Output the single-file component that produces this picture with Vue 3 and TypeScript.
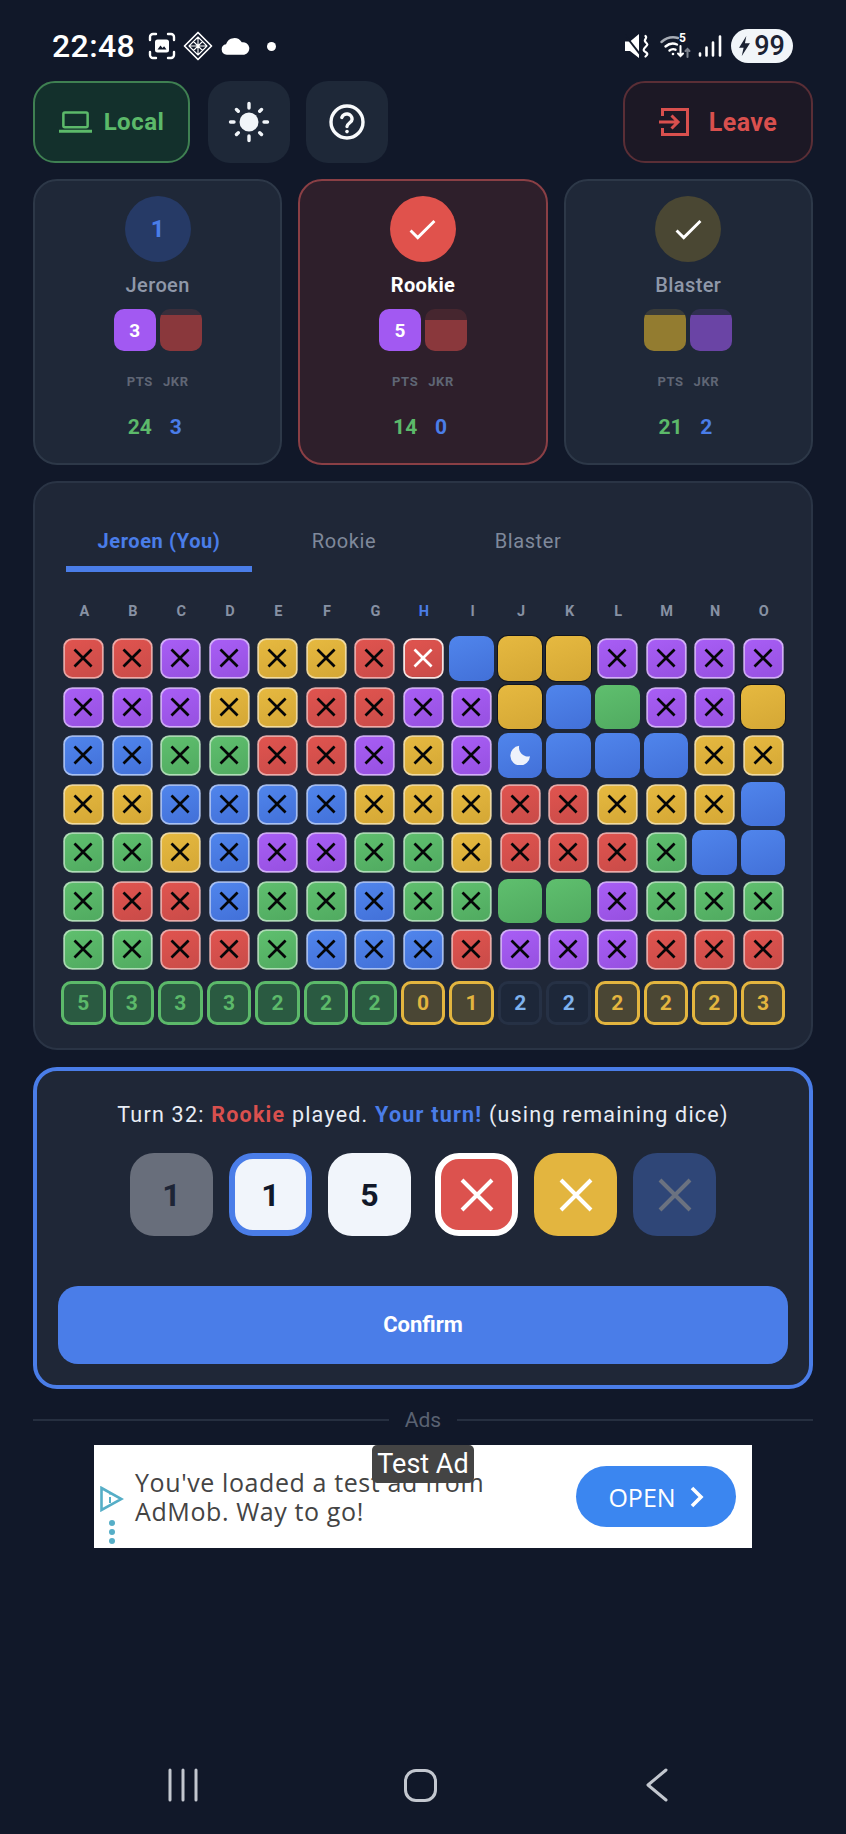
<script setup lang="ts">
import { computed } from 'vue';

type Tone = 'r' | 'p' | 'y' | 'b' | 'g';

interface MiniDie {
  tone: Tone;
  label?: string;
  fill?: number;
}

interface Player {
  name: string;
  badge?: string;
  check: boolean;
  cls: string;
  dice: MiniDie[];
  pts: number;
  jkr: number;
}

const players: Player[] = [
  { name: 'Jeroen', badge: '1', check: false, cls: 'me', dice: [{ tone: 'p', label: '3' }, { tone: 'r', fill: 86 }], pts: 24, jkr: 3 },
  { name: 'Rookie', check: true, cls: 'active', dice: [{ tone: 'p', label: '5' }, { tone: 'r', fill: 74 }], pts: 14, jkr: 0 },
  { name: 'Blaster', check: true, cls: 'done', dice: [{ tone: 'y', fill: 86 }, { tone: 'p', fill: 86 }], pts: 21, jkr: 2 },
];

const tabs = ['Jeroen (You)', 'Rookie', 'Blaster'];
const columns = 'ABCDEFGHIJKLMNO'.split('');

// lowercase = crossed off, uppercase = still open
const rows = [
  'rrppyyrrBYYpppp',
  'pppyyrrppYBGppY',
  'bbggrrpypBBBByy',
  'yybbbbyyyrryyyB',
  'ggybppggyrrrgBB',
  'grrbggbggGGpggg',
  'ggrrgbbbrppprrr',
];

const cells = computed(() =>
  rows.flatMap((row, r) =>
    row.split('').map((ch, c) => ({
      id: `${r}-${c}`,
      tone: ch.toLowerCase(),
      crossed: ch === ch.toLowerCase(),
      picked: r === 0 && c === 7,
      moon: r === 2 && c === 9,
    })),
  ),
);

const totals: { n: number; kind: string }[] = [
  ...[5, 3, 3, 3, 2, 2, 2].map((n) => ({ n, kind: 'won' })),
  ...[0, 1].map((n) => ({ n, kind: 'gold' })),
  ...[2, 2].map((n) => ({ n, kind: 'idle' })),
  ...[2, 2, 2, 3].map((n) => ({ n, kind: 'gold' })),
];
</script>

<template>
  <div class="page">
    <div class="status">
      <div class="status-left">
        <span class="time">22:48</span>
        <svg class="ic-shot" viewBox="0 0 28 28" fill="none" stroke="#fff" stroke-width="2.4" stroke-linecap="round">
          <path d="M2 8V5a3 3 0 0 1 3-3h3M20 2h3a3 3 0 0 1 3 3v3M26 20v3a3 3 0 0 1-3 3h-3M8 26H5a3 3 0 0 1-3-3v-3" />
          <rect x="7" y="7.5" width="14" height="13" rx="2.5" fill="#fff" stroke="none" />
          <path d="M9.5 17.5l3-4 2 2.4 1.6-1.6 2.4 3.2z" fill="#111829" stroke="none" />
        </svg>
        <svg class="ic-kite" viewBox="0 0 30 30" fill="none" stroke="#fff" stroke-width="1.7" stroke-linejoin="round">
          <path d="M15 1.5 28.5 15 15 28.5 1.5 15z" />
          <path d="M15 6 24 15 15 24 6 15zM10.5 10.5 19.5 19.5M19.5 10.5 10.5 19.5M15 6V24M6 15H24" stroke-width="1.1" />
        </svg>
        <svg class="ic-cloud" viewBox="0 0 30 17" fill="#fff">
          <path d="M6 17a5.500 5.500 0 0 1-.8-10.900A9 9 0 0 1 21.500 4.200 6.500 6.500 0 0 1 24 17z" />
        </svg>
        <span class="dot"></span>
      </div>
      <div class="status-right">
        <svg class="ic-mute" viewBox="0 0 26 24" fill="#fff">
          <path d="M0 7.500h5L14 0v24l-9-7H0z" />
          <path d="M0 1 18 24" fill="none" stroke="#111829" stroke-width="2" />
          <path d="M20.500 2c2.500 2.500-2.500 3.500 0 6s2.500 2.500 0 5-2.500 3.500 0 5 2.500 2.500 0 4.500" fill="none" stroke="#fff" stroke-width="2.200" stroke-linecap="round" />
        </svg>
        <div class="wifi">
          <svg viewBox="0 0 32 24" fill="none" stroke="#fff" stroke-width="2.400" stroke-linecap="round">
            <path d="M1.500 8C6 4 12.500 2.500 18 4" stroke="#a7acb5" />
            <path d="M5.500 12.500c3.500-3 8-3.500 11.500-2" />
            <path d="M9.500 16.500c2-1.500 4-1.700 6-.8" />
            <circle cx="13" cy="20" r="1.300" fill="#fff" stroke="none" />
            <path d="M20.500 12v10M18 19.500l2.500 2.500 2.500-2.500" stroke-width="2" />
            <path d="M27.500 23v-8M25.500 17l2-2 2 2" stroke="#7d838e" stroke-width="2" />
          </svg>
          <span class="wifi-five">5</span>
        </div>
        <svg class="ic-signal" viewBox="0 0 24 22" fill="none" stroke="#fff" stroke-width="2.600" stroke-linecap="round">
          <path d="M2 20.500v-2M8.500 20.500v-8M15 20.500V7.500M22 20.500V1.500" />
        </svg>
        <div class="battery">
          <svg viewBox="0 0 12 22" fill="#1b2233"><path d="M8 0 0 13h5l-2 9 9-14H6.500z" /></svg>
          <span>99</span>
        </div>
      </div>
    </div>

    <div class="actions">
      <button class="btn local">
        <svg viewBox="0 0 34 22" fill="none" stroke="currentColor" stroke-width="2.600">
          <rect x="4.500" y="1.300" width="25" height="15" rx="1.500" />
          <path d="M0 20.500h34" stroke-width="3" />
        </svg>
        <span>Local</span>
      </button>
      <button class="btn square">
        <svg viewBox="0 0 42 42" fill="#f1f5f9" stroke="#f1f5f9" stroke-width="3.400" stroke-linecap="round">
          <circle cx="21" cy="21" r="9.500" stroke="none" />
          <path d="M21 2.500v4.500M21 35v4.500M2.500 21H6M36 21h3.500M8.500 8.500l1.800 1.800M31.700 31.700l1.800 1.800M8.500 33.500l1.800-1.800M31.700 10.300l1.800-1.800" />
        </svg>
      </button>
      <button class="btn square">
        <svg viewBox="0 0 36 36" fill="none" stroke="#f8fafc" stroke-width="3.400" stroke-linecap="round">
          <circle cx="18" cy="18" r="16" />
          <path d="M12.800 13.500a5.300 5.300 0 0 1 10.300 1.700c0 3.500-5.100 4.100-5.100 7.300" />
          <path d="M18 27.500v.1" stroke-width="3.600" />
        </svg>
      </button>
      <button class="btn leave">
        <svg viewBox="0 0 30 28" fill="none" stroke="currentColor" stroke-width="3">
          <path d="M3.500 8V1.500h25v25h-25V20" />
          <path d="M0 14h19M12.500 7.500 19 14l-6.500 6.500" />
        </svg>
        <span>Leave</span>
      </button>
    </div>

    <div class="players">
      <div v-for="p in players" :key="p.name" class="player" :class="p.cls">
        <div class="avatar">
          <svg v-if="p.check" viewBox="0 0 28 22" fill="none" stroke="#fff" stroke-width="3">
            <path d="M1.500 12 9 19.500 26.500 2" />
          </svg>
          <span v-else>{{ p.badge }}</span>
        </div>
        <div class="name">{{ p.name }}</div>
        <div class="mini-dice">
          <div v-for="(d, i) in p.dice" :key="i" class="mini" :class="'t-' + d.tone + (d.label ? ' solid' : '')">
            <template v-if="d.label">{{ d.label }}</template>
            <div v-else class="mini-fill" :style="{ height: d.fill + '%' }"></div>
          </div>
        </div>
        <div class="stats">
          <span class="stat-label">PTS</span>
          <span class="stat-label">JKR</span>
          <span class="stat-val pts">{{ p.pts }}</span>
          <span class="stat-val jkr">{{ p.jkr }}</span>
        </div>
      </div>
    </div>

    <section class="board">
      <div class="tabs">
        <div v-for="(t, i) in tabs" :key="t" class="tab" :class="{ on: i === 0 }">{{ t }}</div>
      </div>
      <div class="grid heads">
        <span v-for="c in columns" :key="c" class="head" :class="{ now: c === 'H' }">{{ c }}</span>
      </div>
      <div class="grid">
        <div
          v-for="c in cells"
          :key="c.id"
          class="cell"
          :class="['t-' + c.tone, { crossed: c.crossed, picked: c.picked }]"
        >
          <svg v-if="c.crossed" viewBox="0 0 22 22" fill="none" stroke="currentColor" stroke-width="3">
            <path d="M1.500 1.500 20.500 20.500M20.500 1.500 1.500 20.500" />
          </svg>
          <svg v-if="c.moon" class="moon" viewBox="0 0 24 24" fill="#eef2fb">
            <path d="M11 1A11.800 11.800 0 1 0 24 13.500 10.700 10.700 0 0 1 11 1z" />
          </svg>
        </div>
        <div v-for="(t, i) in totals" :key="i" class="total" :class="t.kind">{{ t.n }}</div>
      </div>
    </section>

    <section class="turn">
      <p class="turn-text">
        Turn 32: <b class="red">Rookie</b> played. <b class="blue">Your turn!</b> (using remaining dice)
      </p>
      <div class="dice-row">
        <div class="dice-group">
          <div class="die num off">1</div>
          <div class="die num sel">1</div>
          <div class="die num">5</div>
        </div>
        <div class="dice-group">
          <div class="die x-red">
            <svg viewBox="0 0 34 34" fill="none" stroke="#fff" stroke-width="4"><path d="M2 2 32 32M32 2 2 32" /></svg>
          </div>
          <div class="die x-yellow">
            <svg viewBox="0 0 34 34" fill="none" stroke="#fff" stroke-width="4"><path d="M2 2 32 32M32 2 2 32" /></svg>
          </div>
          <div class="die x-blue">
            <svg viewBox="0 0 34 34" fill="none" stroke="#6b7280" stroke-width="4"><path d="M2 2 32 32M32 2 2 32" /></svg>
          </div>
        </div>
      </div>
      <button class="confirm">Confirm</button>
    </section>

    <div class="ads-label">
      <span class="line"></span>
      <span>Ads</span>
      <span class="line"></span>
    </div>

    <div class="ad">
      <div class="test-tag">Test Ad</div>
      <div class="ad-marks">
        <svg viewBox="0 0 24 26" fill="none" stroke="#56aec7" stroke-width="2.600">
          <path d="M1.500 2 21.500 13 1.500 24z" />
          <path d="M10 11v6M10 7.500v1" stroke-width="2" />
        </svg>
        <span></span><span></span><span></span>
      </div>
      <div class="ad-copy">You've loaded a test ad from<br />AdMob. Way to go!</div>
      <div class="ad-open">
        <span>OPEN</span>
        <svg viewBox="0 0 14 22" fill="none" stroke="#fff" stroke-width="3.600"><path d="M2 2l9 9-9 9" /></svg>
      </div>
    </div>

    <div class="nav">
      <svg class="nav-recents" viewBox="0 0 30 34" fill="none" stroke="#c3c7cf" stroke-width="3" stroke-linecap="round">
        <path d="M2 2v30M15 2v30M28 2v30" />
      </svg>
      <div class="nav-home"></div>
      <svg class="nav-back" viewBox="0 0 22 34" fill="none" stroke="#c3c7cf" stroke-width="3" stroke-linecap="round" stroke-linejoin="round">
        <path d="M20 2 2 17 20 32" />
      </svg>
    </div>
  </div>
</template>

<style scoped>
.page {
  width: 846px;
  height: 1834px;
  background: #111829;
  display: flex;
  flex-direction: column;
  font-family: Roboto, "Liberation Sans", sans-serif;
  color: #f1f5f9;
  overflow: hidden;
}

/* status bar */
.status {
  height: 34px;
  margin-top: 29px;
  padding: 0 53px 0 52px;
  display: flex;
  justify-content: space-between;
  align-items: center;
}
.status-left,
.status-right {
  display: flex;
  align-items: center;
}
.time {
  font-size: 32px;
  font-weight: 500;
  color: #fff;
  letter-spacing: 0.4px;
}
.ic-shot {
  width: 28px;
  height: 28px;
  margin-left: 13px;
}
.ic-kite {
  width: 30px;
  height: 30px;
  margin-left: 7px;
}
.ic-cloud {
  width: 29px;
  height: 17px;
  margin-left: 8px;
}
.dot {
  width: 9px;
  height: 9px;
  border-radius: 50%;
  background: #fff;
  margin-left: 17px;
}
.ic-mute {
  width: 26px;
  height: 24px;
}
.wifi {
  position: relative;
  width: 32px;
  height: 24px;
  margin-left: 9px;
}
.wifi svg {
  width: 32px;
  height: 24px;
  display: block;
}
.wifi-five {
  position: absolute;
  left: 19px;
  top: -3px;
  font-size: 12px;
  font-weight: 700;
  color: #fff;
}
.ic-signal {
  width: 24px;
  height: 22px;
  margin-left: 6px;
}
.battery {
  width: 62px;
  height: 34px;
  margin-left: 9px;
  border-radius: 17px;
  background: #f1f5f9;
  display: flex;
  align-items: center;
  justify-content: center;
  gap: 4px;
  color: #1b2233;
  font-size: 27px;
  font-weight: 500;
}
.battery svg {
  width: 11px;
  height: 20px;
}

/* top buttons */
.actions {
  margin-top: 18px;
  padding: 0 33px;
  display: flex;
  gap: 16px;
}
.btn {
  height: 82px;
  border: 2px solid transparent;
  border-radius: 22px;
  display: flex;
  align-items: center;
  justify-content: center;
  font-family: inherit;
  font-weight: 700;
  padding: 0;
}
.btn span {
  letter-spacing: 0.5px;
}
.local {
  width: 157px;
  margin-right: 2px;
  gap: 12px;
  background: #13302c;
  border-color: #3f8052;
  color: #5cb96a;
  font-size: 24px;
}
.local svg {
  width: 33px;
  height: 22px;
}
.square {
  width: 82px;
  background: #1e2838;
}
.square:nth-child(2) svg {
  width: 42px;
  height: 42px;
}
.square:nth-child(3) svg {
  width: 36px;
  height: 36px;
}
.leave {
  width: 190px;
  margin-left: auto;
  gap: 20px;
  background: #1c1825;
  border-color: #5a2e36;
  color: #d9504e;
  font-size: 25px;
}
.leave svg {
  width: 30px;
  height: 28px;
}

/* player cards */
.players {
  margin-top: 16px;
  padding: 0 33px;
  display: grid;
  grid-template-columns: repeat(3, 1fr);
  gap: 16px;
}
.player {
  height: 286px;
  box-sizing: border-box;
  padding-top: 15px;
  border: 2px solid #2d3848;
  border-radius: 24px;
  background: #1f2838;
  display: flex;
  flex-direction: column;
  align-items: center;
}
.player.active {
  background: #2e1f2b;
  border-color: #8a3f45;
}
.avatar {
  width: 66px;
  height: 66px;
  border-radius: 50%;
  display: flex;
  align-items: center;
  justify-content: center;
  font-size: 24px;
  font-weight: 700;
}
.avatar svg {
  width: 27px;
  height: 21px;
}
.me .avatar {
  background: #263a66;
  color: #4a7de8;
}
.active .avatar {
  background: #e0524c;
}
.done .avatar {
  background: #4a4733;
}
.name {
  margin-top: 11px;
  line-height: 24px;
  font-size: 20px;
  font-weight: 500;
  letter-spacing: 0.4px;
  color: #8f98a9;
}
.active .name {
  color: #fff;
  font-weight: 700;
}
.mini-dice {
  margin-top: 12px;
  display: flex;
  gap: 4px;
}
.mini {
  position: relative;
  width: 42px;
  height: 42px;
  border-radius: 10px;
  overflow: hidden;
  display: flex;
  align-items: center;
  justify-content: center;
  font-size: 19px;
  font-weight: 700;
  color: #fff;
}
.mini.t-r {
  background: rgba(220, 82, 78, 0.14);
}
.mini.t-y {
  background: rgba(227, 181, 63, 0.14);
}
.mini.t-p {
  background: rgba(162, 89, 242, 0.14);
}
.mini.solid.t-p {
  background: #a259f2;
}
.mini-fill {
  position: absolute;
  left: 0;
  right: 0;
  bottom: 0;
}
.t-r .mini-fill {
  background: #8a383c;
}
.t-y .mini-fill {
  background: #937c30;
}
.t-p .mini-fill {
  background: #6a44a5;
}
.stats {
  margin-top: 23px;
  display: grid;
  grid-template-columns: auto auto;
  column-gap: 10px;
  row-gap: 25px;
  justify-items: center;
}
.stat-label {
  font-size: 13px;
  line-height: 16px;
  font-weight: 700;
  letter-spacing: 0.6px;
  color: #5f6675;
}
.stat-val {
  font-size: 21px;
  line-height: 24px;
  font-weight: 700;
}
.pts {
  color: #5cb96a;
}
.jkr {
  color: #4a7de8;
}

/* score sheet */
.board {
  margin: 16px 33px 0;
  height: 569px;
  box-sizing: border-box;
  padding: 33px 26px 0;
  border: 2px solid #2a3445;
  border-radius: 24px;
  background: #1f2737;
}
.tabs {
  display: flex;
  padding-left: 5px;
}
.tab {
  width: 184px;
  padding: 14px 0;
  line-height: 22px;
  text-align: center;
  font-size: 20px;
  font-weight: 400;
  letter-spacing: 0.6px;
  color: #7f899b;
}
.tab.on {
  width: 186px;
  color: #4a7de8;
  font-weight: 700;
  box-shadow: inset 0 -6px 0 #4a7de8;
  padding-bottom: 20px;
}
.grid {
  display: grid;
  grid-template-columns: repeat(15, 1fr);
  gap: 4px;
}
.heads {
  margin: 32px 0 16px;
}
.head {
  padding-left: 2px;
  line-height: 16px;
  text-align: center;
  font-size: 14.500px;
  font-weight: 700;
  color: #8791a3;
}
.head.now {
  color: #4a7de8;
}
.cell {
  aspect-ratio: 1;
  box-sizing: border-box;
  border-radius: 10px;
  display: flex;
  align-items: center;
  justify-content: center;
}
.cell.t-r {
  background: linear-gradient(160deg, #e0544f, #c94b48);
}
.cell.t-p {
  background: linear-gradient(160deg, #a85ef5, #9650e0);
}
.cell.t-y {
  background: linear-gradient(160deg, #e6b940, #d4a735);
}
.cell.t-b {
  background: linear-gradient(160deg, #5085ec, #4270d8);
}
.cell.t-g {
  background: linear-gradient(160deg, #5fbf6e, #50aa60);
}
.cell.t-y:not(.crossed) {
  box-shadow: 0 0 0 1px rgba(0, 0, 0, 0.45);
}
.cell.crossed {
  transform: scale(0.9);
  border: 2.400px solid rgba(255, 255, 255, 0.5);
  color: #050608;
}
.cell.crossed svg {
  width: 22px;
  height: 22px;
}
.cell.picked {
  border-color: #f6e4e2;
  color: #fff;
}
.moon {
  width: 20px;
  height: 20px;
}
.total {
  margin-top: 5px;
  aspect-ratio: 1;
  box-sizing: border-box;
  border: 3px solid;
  border-radius: 10px;
  display: flex;
  align-items: center;
  justify-content: center;
  font-size: 21px;
  font-weight: 700;
}
.total.won {
  background: #2a5a41;
  border-color: #5cb96a;
  color: #5cb96a;
}
.total.gold {
  background: #4a4634;
  border-color: #e3b53f;
  color: #e3b53f;
}
.total.idle {
  background: #1d2739;
  border-color: #263145;
  color: #7fb2ee;
}

/* turn panel */
.turn {
  margin: 17px 33px 0;
  height: 322px;
  box-sizing: border-box;
  padding: 32px 21px 0;
  border: 4px solid #4a7de8;
  border-radius: 24px;
  background: #1f2737;
}
.turn-text {
  margin: 0;
  line-height: 24px;
  text-align: center;
  font-size: 21.500px;
  letter-spacing: 1.220px;
  white-space: nowrap;
  color: #e8edf5;
}
.turn-text b {
  font-weight: 700;
}
.red {
  color: #d9504e;
}
.blue {
  color: #4a7de8;
}
.dice-row {
  margin-top: 26px;
  display: flex;
  justify-content: center;
  gap: 24px;
}
.dice-group {
  display: flex;
  gap: 16px;
}
.die {
  width: 83px;
  height: 83px;
  box-sizing: border-box;
  border-radius: 24px;
  display: flex;
  align-items: center;
  justify-content: center;
}
.die svg {
  width: 34px;
  height: 34px;
}
.die.num {
  background: #f1f5fb;
  color: #111829;
  font-size: 32px;
  font-weight: 700;
}
.die.off {
  background: #686e7b;
  color: #1e2536;
}
.die.sel {
  border: 6px solid #4a7de8;
}
.x-red {
  background: #dc524e;
  border: 6px solid #fff;
}
.x-yellow {
  background: #e3b53f;
}
.x-blue {
  background: #2f4677;
}
.confirm {
  display: block;
  width: 100%;
  height: 78px;
  margin-top: 50px;
  padding: 0 0 2px;
  border: 0;
  border-radius: 20px;
  background: #4a7de8;
  color: #fff;
  font-family: inherit;
  font-size: 22px;
  font-weight: 700;
}

/* ads */
.ads-label {
  margin: 20px 33px 0;
  display: flex;
  align-items: center;
  gap: 16px;
  line-height: 22px;
  font-size: 21px;
  color: #5a6272;
}
.line {
  flex: 1;
  height: 2px;
  background: #262f40;
}
.ad {
  position: relative;
  width: 658px;
  height: 103px;
  margin: 14px auto 0;
  box-sizing: border-box;
  padding: 0 16px 0 6px;
  background: #fff;
  display: flex;
  align-items: center;
  font-family: "Open Sans", sans-serif;
}
.test-tag {
  position: absolute;
  left: 278px;
  top: 0;
  width: 102px;
  height: 38px;
  border-radius: 5px;
  background: #444;
  color: #fff;
  font-size: 27px;
  line-height: 38px;
  text-align: center;
  font-family: Roboto, sans-serif;
}
.ad-marks {
  width: 24px;
  display: flex;
  flex-direction: column;
  align-items: center;
  gap: 3px;
  margin-top: 36px;
}
.ad-marks svg {
  width: 24px;
  height: 26px;
  margin-bottom: 5px;
}
.ad-marks span {
  width: 6px;
  height: 6px;
  border-radius: 50%;
  background: #56aec7;
}
.ad-copy {
  margin-left: 11px;
  font-size: 25px;
  line-height: 29px;
  letter-spacing: 0.6px;
  color: #444;
  flex: 1;
}
.ad-open {
  width: 160px;
  height: 61px;
  border-radius: 31px;
  background: #3b86f0;
  color: #fff;
  font-size: 25px;
  display: flex;
  align-items: center;
  justify-content: center;
  gap: 14px;
}
.ad-open svg {
  width: 14px;
  height: 22px;
}

/* android nav */
.nav {
  margin-top: auto;
  padding: 0 178px 32px 168px;
  display: flex;
  justify-content: space-between;
  align-items: center;
}
.nav-recents {
  width: 30px;
  height: 34px;
}
.nav-home {
  width: 33px;
  height: 33px;
  margin-left: -4px;
  box-sizing: border-box;
  border: 3px solid #c3c7cf;
  border-radius: 12px;
}
.nav-back {
  width: 22px;
  height: 34px;
}
</style>

<style>
body {
  background: #111829;
}
</style>
